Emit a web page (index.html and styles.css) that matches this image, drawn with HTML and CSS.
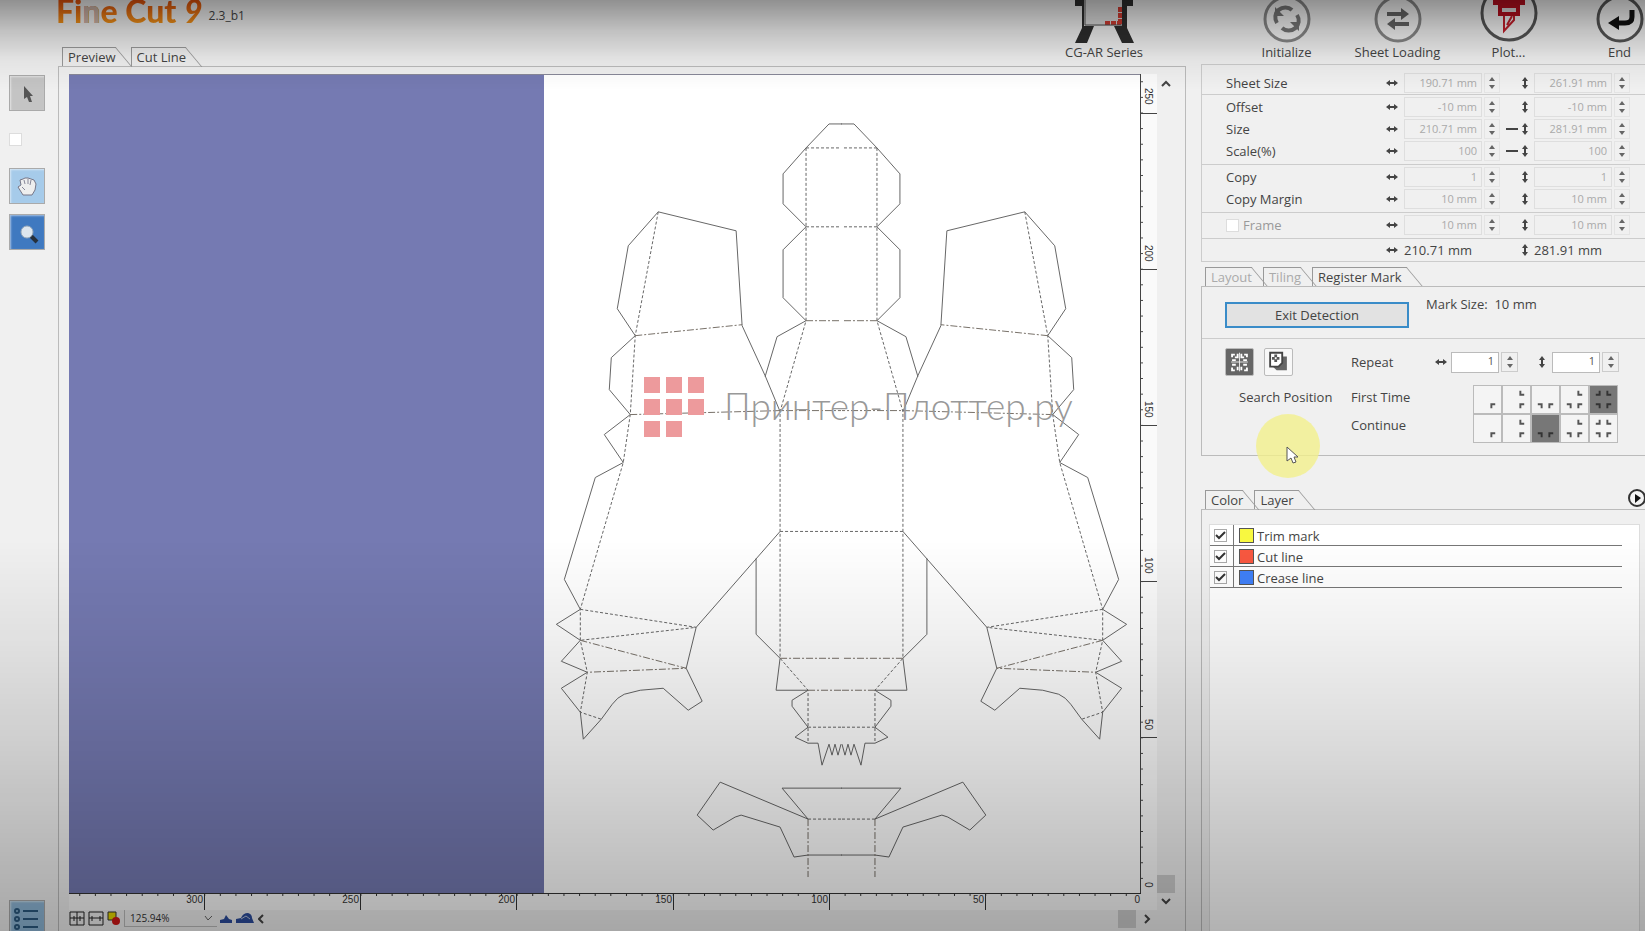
FILE: index.html
```
<!DOCTYPE html>
<html lang="en">
<head>
    <meta charset="UTF-8">
    <meta name="viewport" content="width=device-width, initial-scale=1.0">
    <title>FineCut 9</title>
    <link rel="stylesheet" href="styles.css">
</head>
<body>
    <!-- shared icons -->
    <svg class="defs" aria-hidden="true">
        <symbol id="arrow-h" viewBox="0 0 12 8"><path d="M0 4l4-3v2h4V1l4 3-4 3V5H4v2z"/></symbol>
        <symbol id="arrow-v" viewBox="0 0 8 12"><path d="M4 0l3 4H5v4h2l-3 4-3-4h2V4H1z"/></symbol>
        <symbol id="tl" viewBox="0 0 28 28"><path d="M10 5v4H6"/></symbol>
        <symbol id="tr" viewBox="0 0 28 28"><path d="M18 5v4h4"/></symbol>
        <symbol id="bl" viewBox="0 0 28 28"><path d="M6 19h4v4"/></symbol>
        <symbol id="br" viewBox="0 0 28 28"><path d="M22 19h-4v4"/></symbol>
    </svg>

    <div class="app">
        <header class="header">
            <div class="brand">
                <h1 class="logo">Fi<span class="faded">n</span>e Cut <i>9</i></h1>
                <span class="version">2.3_b1</span>
            </div>
            <div class="device">
                <svg width="60" height="43" viewBox="0 0 60 43">
                    <path d="M1 0h58v6h-6v22l7 15h-12l-8-17H20L13 43H1L8 28V6H1z" fill="#2e2e2e"/>
                    <path d="M10 0h38v26H10z" fill="#dcdcdc"/>
                    <path d="M46 7v17M31 23h16" stroke="#d03c32" stroke-width="4" stroke-dasharray="5 1"/>
                    <path d="M11 0v25h37" fill="none" stroke="#555"/>
                </svg>
                <span>CG-AR Series</span>
            </div>
            <nav class="actions">
                <button class="action">
                    <svg width="48" height="43" viewBox="0 0 48 43">
                        <circle cx="24" cy="19" r="22" class="ring"/>
                        <path d="M14 23a10 10 0 0 1 15-13M34 15a10 10 0 0 1-15 13" fill="none" stroke="#777" stroke-width="4"/>
                        <path d="M12 7v9h9zM36 31v-9h-9z" fill="#777"/>
                    </svg>
                    <span>Initialize</span>
                </button>
                <button class="action">
                    <svg width="48" height="43" viewBox="0 0 48 43">
                        <circle cx="24" cy="19" r="22" class="ring"/>
                        <path d="M13 12h14V8l8 6-8 6v-4H13zM35 22H21v-4l-8 6 8 6v-4h14z" fill="#666"/>
                    </svg>
                    <span>Sheet Loading</span>
                </button>
                <button class="action">
                    <svg width="60" height="43" viewBox="0 0 60 43">
                        <circle cx="30" cy="13" r="27" class="ring dark"/>
                        <path d="M14 0h32v5h-5v11H19V5h-5z" fill="#b7101f"/>
                        <path d="M23 8h14v4H23z" fill="#ddd"/>
                        <path d="M25 16v15l10-11v-4M28 25l5-9" fill="none" stroke="#c4202c" stroke-width="2"/>
                    </svg>
                    <span>Plot...</span>
                </button>
                <button class="action">
                    <svg width="48" height="43" viewBox="0 0 48 43">
                        <circle cx="24" cy="19" r="22" class="ring dark"/>
                        <path d="M36 10v7q0 6-7 6H20" fill="none" stroke="#111" stroke-width="5"/>
                        <path d="M12 23l11-7v14z" fill="#111"/>
                    </svg>
                    <span>End</span>
                </button>
            </nav>
        </header>

        <aside class="tools">
            <button class="tool off" aria-label="Select">
                <svg width="36" height="36" viewBox="0 0 36 36"><path d="M14 10v13l3-2 2 5h3l-2-6h3z" fill="#555"/></svg>
            </button>
            <input class="tool-check" type="checkbox" aria-label="Show guide">
            <button class="tool hand" aria-label="Move">
                <svg width="36" height="36" viewBox="0 0 36 36"><path d="M13 26l-5-8 3-2-1-5 3-1 2-1 3 0 3 1 3 1 2 4-1 6-3 5z" fill="#eee" stroke="#778" /><path d="M14 11l1 4M18 10v5M21 11l-1 5M12 18l3 3" stroke="#889" fill="none"/></svg>
            </button>
            <button class="tool zoom" aria-label="Zoom">
                <svg width="36" height="36" viewBox="0 0 36 36"><path d="M20 20l7 7" stroke="#26303c" stroke-width="4"/><circle cx="17" cy="17" r="6" fill="#dde6ee" stroke="#9ab"/></svg>
            </button>
            <button class="tool list" aria-label="List">
                <svg width="36" height="36" viewBox="0 0 36 36"><path d="M13 10h15M13 18h15M13 26h15" stroke="#2c5a80" stroke-width="2"/><g fill="none" stroke="#2c5a80" stroke-width="2"><circle cx="7" cy="10" r="2"/><circle cx="7" cy="18" r="2"/><circle cx="7" cy="26" r="2"/></g></svg>
            </button>
        </aside>

        <main class="preview">
            <div class="tabs">
                <button class="tab active">Preview</button>
                <button class="tab">Cut Line</button>
            </div>
            <div class="stage">
                <div class="canvas">
                    <div class="paper">
                        <svg class="drawing" viewBox="544 74 596 819">
                            <defs>
                                <g id="half">
                                    <g class="cut">
                                        <path d="M780 411L765 375 742 325 736 230 658 211 628 245 617 308 635 335 611 357 609 389 630 414 604 434 623 462 595 477 564 579 580 609 556 624 580 640 561 661 587 672 561 688 580 712 583 739 601 719 612 704Q617 697 624 694L640 690 663 688 688 710 702 701 686 668 696 627 780 531"/>
                                        <path d="M842 123H829L806 147 783 173V203L806 226 783 249V297L806 320 777 336 765 376"/>
                                        <path d="M756 558V634L780 658 776 690H808L792 700V706L808 727 795 737 808 743H818L822 765 829 744 832 755 835 744 838 755 841 744"/>
                                        <path d="M842 788H782L808 819 720 782 697 815 713 830 735 817 741 815 780 827 794 857 808 855H842"/>
                                    </g>
                                    <g class="crease">
                                        <path d="M806 147V320L780 411V658L808 690V743M806 147H841M806 226H841M780 531H841M808 727H841M808 819H841"/>
                                        <path d="M658 211L635 335 630 414 623 462 580 609V640L587 672 580 712 601 719M580 609L696 627 580 640"/>
                                    </g>
                                    <g class="crease dot">
                                        <path d="M635 335L742 324M806 320H841M630 414L780 410H841M580 640L686 668 587 672M780 658H841M808 690H841M808 819V877"/>
                                    </g>
                                </g>
                            </defs>
                            <use href="#half"/>
                            <use href="#half" transform="translate(1683 0) scale(-1 1)"/>
                        </svg>
                        <div class="watermark">
                            <span class="dots"><i></i><i></i><i></i><i></i><i></i><i></i><i></i><i></i></span>
                            <span class="name">Принтер-Плоттер.ру</span>
                        </div>
                    </div>
                </div>
                <svg class="ruler-v" width="17" viewBox="1140 74 17 819" preserveAspectRatio="xMinYMax slice">
                    <defs><pattern id="tv" x="1140" y="112.5" width="4" height="15.62" patternUnits="userSpaceOnUse"><path d="M0 .5h3" stroke="#444"/></pattern></defs>
                    <rect x="1140" y="74" width="3" height="819" fill="url(#tv)"/>
                    <path d="M1140.500 74V893M1141 113.500h16M1141 269.500h16M1141 425.500h16M1141 581.500h16M1141 737.500h16" stroke="#444"/>
                    <g class="ruler-text">
                        <text transform="translate(1145 88) rotate(90)">250</text>
                        <text transform="translate(1145 245) rotate(90)">200</text>
                        <text transform="translate(1145 401) rotate(90)">150</text>
                        <text transform="translate(1145 557) rotate(90)">100</text>
                        <text transform="translate(1145 719) rotate(90)">50</text>
                        <text transform="translate(1145 882) rotate(90)">0</text>
                    </g>
                </svg>
                <div class="scroll-v">
                    <button aria-label="Scroll up"><svg width="10" height="7" viewBox="0 0 10 7"><path d="M1 6l4-4 4 4"/></svg></button>
                    <span class="thumb"></span>
                </div>
                <svg class="ruler-h" height="17" viewBox="69 893 1088 17" preserveAspectRatio="xMaxYMin slice">
                    <defs><pattern id="th" x="48" y="893" width="15.62" height="4" patternUnits="userSpaceOnUse"><path d="M.5 0v3" stroke="#333"/></pattern></defs>
                    <rect x="69" y="893" width="1071" height="3" fill="url(#th)"/>
                    <path d="M69 893.500H1141M204.500 894v16M360.500 894v16M516.500 894v16M673.500 894v16M829.500 894v16M985.500 894v16" stroke="#333"/>
                    <g class="ruler-text">
                        <text x="203" y="903" text-anchor="end">300</text>
                        <text x="359" y="903" text-anchor="end">250</text>
                        <text x="515" y="903" text-anchor="end">200</text>
                        <text x="672" y="903" text-anchor="end">150</text>
                        <text x="828" y="903" text-anchor="end">100</text>
                        <text x="984" y="903" text-anchor="end">50</text>
                        <text x="1140" y="903" text-anchor="end">0</text>
                    </g>
                </svg>
                <button class="scroll-down" aria-label="Scroll down"><svg width="10" height="7" viewBox="0 0 10 7"><path d="M1 1l4 4 4-4"/></svg></button>
            </div>
            <div class="statusbar">
                <button aria-label="Fit all"><svg width="16" height="15" viewBox="0 0 16 15"><path d="M1 1h14v13H1zM8 1v13M1 7h14M5 5v5M11 5v5" fill="none" stroke="#222"/></svg></button>
                <button aria-label="Fit width"><svg width="16" height="15" viewBox="0 0 16 15"><path d="M1 1h14v13H1zM1 7h14M4 5v5M12 5v5" fill="none" stroke="#222"/></svg></button>
                <button aria-label="Objects"><svg width="14" height="15" viewBox="0 0 14 15"><path d="M1 1h8v8H1z" fill="#e8d800" stroke="#333"/><circle cx="9" cy="10" r="4" fill="#d01818"/></svg></button>
                <select class="zoom-level" aria-label="Zoom level"><option>125.94%</option></select>
                <button aria-label="Zoom out"><svg width="12" height="15" viewBox="0 0 12 15"><path d="M0 12V9l4-1 2-4 3 4 3 1v3z" fill="#2c4c9c"/></svg></button>
                <button aria-label="Zoom in"><svg width="20" height="15" viewBox="0 0 20 15"><path d="M1 12V8l5-1q2-5 7-5 4 1 4 5l2 5z" fill="#2c4c9c"/><path d="M6 8l5-3 4 3" fill="none" stroke="#b8c4dc"/></svg></button>
                <button class="prev" aria-label="Scroll left"><svg width="7" height="10" viewBox="0 0 7 10"><path d="M5 1L1 5l4 4"/></svg></button>
                <span class="thumb"></span>
                <button class="next" aria-label="Scroll right"><svg width="7" height="10" viewBox="0 0 7 10"><path d="M1 1l4 4-4 4"/></svg></button>
            </div>
        </main>

        <section class="side">
            <form class="props">
                <fieldset class="group first">
                    <div class="row">
                        <label for="sheetW">Sheet Size</label>
                        <svg class="ah"><use href="#arrow-h"/></svg>
                        <input id="sheetW" value="190.71 mm" disabled><span class="spin"><button></button><button></button></span>
                        <i></i><svg class="av"><use href="#arrow-v"/></svg>
                        <input aria-label="Sheet height" value="261.91 mm" disabled><span class="spin"><button></button><button></button></span>
                    </div>
                </fieldset>
                <fieldset class="group">
                    <div class="row">
                        <label for="offX">Offset</label>
                        <svg class="ah"><use href="#arrow-h"/></svg>
                        <input id="offX" value="-10 mm" disabled><span class="spin"><button></button><button></button></span>
                        <i></i><svg class="av"><use href="#arrow-v"/></svg>
                        <input aria-label="Offset Y" value="-10 mm" disabled><span class="spin"><button></button><button></button></span>
                    </div>
                    <div class="row">
                        <label for="sizeW">Size</label>
                        <svg class="ah"><use href="#arrow-h"/></svg>
                        <input id="sizeW" value="210.71 mm" disabled><span class="spin"><button></button><button></button></span>
                        <i class="link"></i><svg class="av"><use href="#arrow-v"/></svg>
                        <input aria-label="Size height" value="281.91 mm" disabled><span class="spin"><button></button><button></button></span>
                    </div>
                    <div class="row">
                        <label for="scaleX">Scale(%)</label>
                        <svg class="ah"><use href="#arrow-h"/></svg>
                        <input id="scaleX" value="100" disabled><span class="spin"><button></button><button></button></span>
                        <i class="link"></i><svg class="av"><use href="#arrow-v"/></svg>
                        <input aria-label="Scale Y" value="100" disabled><span class="spin"><button></button><button></button></span>
                    </div>
                </fieldset>
                <fieldset class="group">
                    <div class="row">
                        <label for="copyX">Copy</label>
                        <svg class="ah"><use href="#arrow-h"/></svg>
                        <input id="copyX" value="1" disabled><span class="spin"><button></button><button></button></span>
                        <i></i><svg class="av"><use href="#arrow-v"/></svg>
                        <input aria-label="Copy Y" value="1" disabled><span class="spin"><button></button><button></button></span>
                    </div>
                    <div class="row">
                        <label for="marginX">Copy Margin</label>
                        <svg class="ah"><use href="#arrow-h"/></svg>
                        <input id="marginX" value="10 mm" disabled><span class="spin"><button></button><button></button></span>
                        <i></i><svg class="av"><use href="#arrow-v"/></svg>
                        <input aria-label="Copy Margin Y" value="10 mm" disabled><span class="spin"><button></button><button></button></span>
                    </div>
                </fieldset>
                <fieldset class="group">
                    <div class="row">
                        <label class="frame"><input type="checkbox"> Frame</label>
                        <svg class="ah"><use href="#arrow-h"/></svg>
                        <input aria-label="Frame X" value="10 mm" disabled><span class="spin"><button></button><button></button></span>
                        <i></i><svg class="av"><use href="#arrow-v"/></svg>
                        <input aria-label="Frame Y" value="10 mm" disabled><span class="spin"><button></button><button></button></span>
                    </div>
                </fieldset>
                <div class="group total">
                    <div class="row">
                        <span></span>
                        <svg class="ah"><use href="#arrow-h"/></svg>
                        <output>210.71 mm</output><span></span>
                        <i></i><svg class="av"><use href="#arrow-v"/></svg>
                        <output>281.91 mm</output>
                    </div>
                </div>
            </form>

            <div class="tabs">
                <button class="tab muted">Layout</button>
                <button class="tab muted">Tiling</button>
                <button class="tab active">Register Mark</button>
            </div>
            <div class="register">
                <div class="detect">
                    <button class="exit">Exit Detection</button>
                    <span>Mark Size:&nbsp; 10 mm</span>
                </div>
                <div class="marks">
                    <div class="modes">
                        <button class="mode on" aria-label="Single sheet"><svg width="28" height="28" viewBox="0 0 28 28"><path d="M6 9V6h3M12 5v4H9M16 5v4h3M22 9V6h-3M6 12h4M18 12h4M6 17h4M18 17h4M6 20v3h3M12 23v-4M16 23v-4M22 20v3h-3" fill="none" stroke="#fff" stroke-width="2"/><path d="M14 4v20M5 14h18" stroke="#eee"/></svg></button>
                        <button class="mode" aria-label="Multiple sheets"><svg width="28" height="28" viewBox="0 0 28 28"><path d="M9 8h14v15H12l-4-4z" fill="#666"/><path d="M5 4h13v11l-4 4H5z" fill="#fff" stroke="#444" stroke-width="2"/><path d="M11 6v9M7 10h8" stroke="#555" stroke-width="3" stroke-dasharray="3 2"/></svg></button>
                    </div>
                    <label class="rep" for="repX">Repeat</label>
                    <div class="repeat">
                        <svg class="ah"><use href="#arrow-h"/></svg>
                        <input id="repX" value="1"><span class="spin"><button></button><button></button></span>
                        <svg class="av"><use href="#arrow-v"/></svg>
                        <input aria-label="Repeat Y" value="1"><span class="spin"><button></button><button></button></span>
                    </div>
                    <span class="search">Search Position</span>
                    <div class="times"><span>First Time</span><span>Continue</span></div>
                    <div class="positions">
                        <button><svg><use href="#br"/></svg></button>
                        <button><svg><use href="#br"/><use href="#tr"/></svg></button>
                        <button><svg><use href="#bl"/><use href="#br"/></svg></button>
                        <button><svg><use href="#bl"/><use href="#br"/><use href="#tr"/></svg></button>
                        <button class="on"><svg><use href="#tl"/><use href="#tr"/><use href="#bl"/><use href="#br"/></svg></button>
                        <button><svg><use href="#br"/></svg></button>
                        <button><svg><use href="#br"/><use href="#tr"/></svg></button>
                        <button class="on"><svg><use href="#bl"/><use href="#br"/></svg></button>
                        <button><svg><use href="#bl"/><use href="#br"/><use href="#tr"/></svg></button>
                        <button><svg><use href="#tl"/><use href="#tr"/><use href="#bl"/><use href="#br"/></svg></button>
                    </div>
                </div>
                <div class="pointer">
                    <svg width="64" height="64" viewBox="0 0 64 64"><circle cx="32" cy="32" r="32" fill="#f2f08c" opacity=".8"/><path d="M31 33v14l4-3 2 5 3-1-2-5h4z" fill="#fff" stroke="#555"/></svg>
                </div>
            </div>

            <div class="tabs layer-tabs">
                <button class="tab">Color</button>
                <button class="tab active">Layer</button>
                <button class="more" aria-label="Layer menu"><svg width="19" height="19" viewBox="0 0 19 19"><circle cx="9" cy="9" r="8" fill="#f4f4f4" stroke="#333" stroke-width="2"/><path d="M7 5l6 4-6 5z" fill="#111"/></svg></button>
            </div>
            <div class="layers">
                <ul>
                    <li><span class="check"><input type="checkbox" id="trim" checked></span><span class="swatch yellow"></span><label for="trim">Trim mark</label></li>
                    <li><span class="check"><input type="checkbox" id="cut" checked></span><span class="swatch red"></span><label for="cut">Cut line</label></li>
                    <li><span class="check"><input type="checkbox" id="fold" checked></span><span class="swatch blue"></span><label for="fold">Crease line</label></li>
                </ul>
            </div>
        </section>
    </div>
</body>
</html>
```
FILE: styles.css
```
* {
    box-sizing: border-box;
}

body {
    margin: 0;
    font-family: 'Open Sans', 'Noto Sans', sans-serif;
    font-size: 13px;
    line-height: 18px;
    color: #444;
    background-color: #f0f0f0;
    overflow: hidden;
}

/* shade at the top and bottom of the window */
body::after {
    content: "";
    position: fixed;
    inset: 0;
    pointer-events: none;
    background:
        linear-gradient(rgba(0, 0, 0, 0.4), rgba(0, 0, 0, 0.2) 30px, rgba(0, 0, 0, 0.05) 60px, transparent 90px),
        linear-gradient(transparent 58%, rgba(0, 0, 0, 0.06) 68%, rgba(0, 0, 0, 0.15) 81%, rgba(0, 0, 0, 0.3));
}

button {
    font: inherit;
    color: inherit;
    padding: 0;
    border: 0;
    background: none;
}

input, select {
    font: inherit;
    margin: 0;
}

svg {
    display: block;
}

.defs {
    position: absolute;
    width: 0;
    height: 0;
}

.app {
    display: grid;
    grid-template-columns: 58px minmax(0, 1fr) 445px;
    grid-template-rows: 47px minmax(0, 1fr);
    height: 100vh;
}

/* header */
.header {
    grid-column: 1 / -1;
    display: flex;
    height: 64px;
}

.brand {
    display: flex;
    flex: 1;
    gap: 6px;
    padding-left: 56px;
}

.logo {
    margin: 0;
    font-size: 32px;
    line-height: 22px;
    height: 28px;
    font-weight: 900;
    font-family: Lato, sans-serif;
    color: transparent;
    background: linear-gradient(#e2500c, #f4a01c);
    background-clip: text;
    -webkit-background-clip: text;
}

.faded {
    color: #ccb4a8;
}

.version {
    padding-top: 7px;
    font-size: 12px;
}

.device {
    display: flex;
    flex-direction: column;
    align-items: center;
    width: 80px;
    margin-right: 56px;
}

.actions {
    display: grid;
    grid-template-columns: repeat(4, 111px);
    width: 445px;
    padding-left: 31px;
}

.action {
    display: flex;
    flex-direction: column;
    align-items: center;
}

.ring {
    fill: rgba(255, 255, 255, 0.3);
    stroke: #888;
    stroke-width: 3;
}

.ring.dark {
    stroke: #555;
}

/* left tools */
.tools {
    display: flex;
    flex-direction: column;
    align-items: flex-start;
    gap: 10px;
    padding: 28px 0 0 9px;
    overflow: hidden;
}

.tool {
    width: 36px;
    height: 36px;
    flex: none;
    border: 1px solid #aaa;
    box-shadow: inset 1px 1px 2px #fff8;
}

.off {
    background-color: #c4c4c4;
}

.tool-check, .frame input {
    appearance: none;
    width: 13px;
    height: 13px;
    border: 1px solid #ddd;
    background-color: #fff;
}

.tool-check {
    margin: 12px 0;
}

.hand {
    background-color: #a6cbea;
}

.zoom {
    background-color: #3f79c0;
}

.list {
    margin-top: auto;
    margin-bottom: -5px;
    background-color: #8fb8d8;
}

/* tabs */
.tabs {
    display: flex;
    height: 19px;
    padding-left: 4px;
}

.tab {
    position: relative;
    height: 19px;
    margin-right: 15px;
    padding: 0 0 0 5px;
    border: 1px solid #999;
    border-width: 1px 0 0 1px;
}

.tab::after {
    content: "";
    position: absolute;
    top: -1px;
    right: -8px;
    width: 10px;
    height: 19px;
    border: 1px solid #999;
    border-width: 1px 1px 0 0;
    transform: skewX(40deg);
}

.muted {
    color: #aaa;
}

/* preview */
.preview {
    display: flex;
    flex-direction: column;
    margin-right: 14px;
    min-width: 0;
}

.stage {
    display: grid;
    grid-template-columns: minmax(0, 1fr) 17px 28px;
    grid-template-rows: minmax(0, 1fr) 17px;
    flex: 1;
    min-height: 0;
    padding: 7px 0 0 10px;
    border: 1px solid #bbb;
    border-width: 1px 1px 0 1px;
}

.canvas {
    display: flex;
    justify-content: flex-end;
    background-color: #757ab2;
    border-top: 1px solid #889;
    min-height: 0;
}

.paper {
    position: relative;
    width: 596px;
    background-color: #fff;
}

.drawing {
    width: 100%;
    height: 100%;
}

.cut, .crease {
    fill: none;
    stroke: #666;
}

.crease {
    stroke-dasharray: 3 2;
}

.dot {
    stroke-dasharray: 7 2 2 2;
    stroke: #777068;
}

.watermark {
    position: absolute;
    top: 302px;
    left: 100px;
    display: flex;
    gap: 20px;
}

.dots {
    display: grid;
    grid-template-columns: repeat(3, 16px);
    grid-auto-rows: 16px;
    gap: 6px;
}

.dots i {
    background-color: #ed9a9c;
}

.name {
    font-family: Lato, sans-serif;
    font-weight: 300;
    font-size: 37px;
    line-height: 58px;
    color: #999;
    white-space: nowrap;
}

.ruler-v, .ruler-h {
    background-color: #fafafa;
}

.ruler-v {
    height: 100%;
}

.ruler-h {
    grid-column: 1 / 3;
    width: 100%;
}

.ruler-text {
    font-family: 'Liberation Sans', sans-serif;
    font-size: 10px;
    fill: #333;
}

.scroll-v {
    display: flex;
    flex-direction: column;
    justify-content: space-between;
    align-items: center;
    width: 18px;
    padding-top: 6px;
}

.scroll-v path, .scroll-down path, .prev path, .next path {
    fill: none;
    stroke: #444;
    stroke-width: 2;
}

.thumb {
    width: 18px;
    height: 18px;
    background-color: #cdcdcd;
}

.scroll-down {
    width: 18px;
    display: flex;
    justify-content: center;
    align-items: center;
}

.statusbar {
    display: flex;
    align-items: center;
    gap: 3px;
    height: 21px;
    padding: 0 34px 4px 10px;
    border: 1px solid #bbb;
    border-width: 0 1px;
}

.zoom-level {
    appearance: none;
    width: 93px;
    height: 17px;
    padding: 0 5px;
    border: 1px solid #bbb;
    border-width: 0 0 1px 1px;
    border-radius: 0;
    font-size: 10px;
    line-height: 14px;
    color: #333;
    background: #f0f0f0 url("data:image/svg+xml,%3Csvg xmlns='http://www.w3.org/2000/svg' width='9' height='6'%3E%3Cpath d='M1 1l3 4 4-4' fill='none' stroke='%23666'/%3E%3C/svg%3E") no-repeat right 4px center;
}

.prev {
    margin-right: auto;
}

.next {
    margin-left: 5px;
}

/* right side */
.side {
    display: flex;
    flex-direction: column;
    overflow: hidden;
    padding-left: 1px;
    padding-top: 17px;
}

.props {
    border: 1px solid #ccc;
    border-right: 0;
}

.group {
    margin: 0;
    padding: 1px 0 2px 24px;
    border: 0;
    border-bottom: 1px solid #ccc;
    min-width: 0;
}

.first {
    padding-top: 7px;
    padding-bottom: 0;
}

.total {
    padding-top: 0;
    padding-bottom: 0;
    border: 0;
}

.row {
    display: grid;
    grid-template-columns: 160px 18px 78px 18px 19px 15px 78px 18px;
    align-items: center;
    height: 22px;
}

.ah {
    width: 12px;
    height: 8px;
    fill: #444;
}

.av {
    width: 8px;
    height: 12px;
    fill: #444;
    margin-left: 2px;
}

.row input:disabled {
    width: 78px;
    height: 20px;
    padding: 0 4px 2px;
    border: 1px solid #dedede;
    background-color: #f0f0f0;
    color: #aaa;
    font-size: 11px;
    text-align: right;
}

.link {
    width: 12px;
    height: 2px;
    margin-left: 6px;
    background-color: #444;
}

.spin {
    display: flex;
    flex-direction: column;
    align-items: center;
    justify-content: space-between;
    height: 20px;
    padding: 3px 0;
    margin-left: 2px;
    border: 1px solid #e4e4e4;
}

.spin button {
    border: 3px solid transparent;
    border-top-width: 0;
    border-bottom: 4px solid #666;
}

.spin button + button {
    border-bottom-width: 0;
    border-top: 4px solid #666;
}

.frame {
    display: flex;
    align-items: center;
    gap: 4px;
    color: #999;
}

.total output {
    white-space: nowrap;
}

.side .tabs {
    margin-top: 5px;
}

.side .tab {
    margin-right: 11px;
}

.side .active {
    padding-right: 5px;
}

.register {
    position: relative;
    height: 170px;
    border: 1px solid #bbb;
    border-width: 1px 0 1px 1px;
}

.detect {
    display: flex;
    gap: 17px;
    padding: 15px 0 10px 23px;
    line-height: 5px;
    border-bottom: 1px solid #ccc;
}

.exit {
    width: 184px;
    height: 26px;
    border: 2px solid #3a8cc8;
    background-color: #e2e2e2;
}

.marks {
    display: grid;
    grid-template-columns: 126px 84px 1fr;
    grid-template-rows: 28px 58px;
    row-gap: 9px;
    padding: 9px 0 0 23px;
}

.modes {
    display: flex;
    gap: 10px;
}

.mode {
    width: 29px;
    height: 28px;
    border: 1px solid #bbb;
    border-radius: 2px;
    background-color: #f8f8f8;
}

.mode svg {
    width: 100%;
    height: 100%;
}

.mode.on {
    background-color: #666;
}

.rep {
    line-height: 28px;
}

.repeat {
    display: grid;
    grid-template-columns: 16px 48px 19px 34px 48px 19px;
    align-items: center;
}

.repeat .av {
    justify-self: end;
    margin-right: 6px;
}

.repeat input {
    width: 48px;
    height: 21px;
    padding: 0 4px 3px;
    border: 1px solid #bbb;
    background-color: #fff;
    color: #555;
    font-size: 11px;
    text-align: right;
}

.repeat .spin {
    border-color: #ccc;
}

.search {
    padding: 3px 0 0 14px;
}

.times {
    display: flex;
    flex-direction: column;
    gap: 10px;
    padding-top: 3px;
}

.positions {
    display: grid;
    grid-template-columns: repeat(5, 29px);
    grid-auto-rows: 29px;
    margin-left: 38px;
}

.positions button {
    border: 1px solid #bbb;
    background-color: #f4f4f4;
}

.positions svg {
    width: 27px;
    height: 27px;
    fill: none;
    stroke: #555;
    stroke-width: 2;
}

.positions .on {
    background-color: #777;
}

.positions .on svg {
    stroke: #333;
}

/* highlighted mouse pointer over the panel */
.pointer {
    position: absolute;
    left: 54px;
    bottom: -23px;
    pointer-events: none;
}

.side .layer-tabs {
    margin-top: 34px;
}

.more {
    margin-left: auto;
    margin-right: -2px;
    margin-top: -3px;
}

.layers {
    flex: 1;
    padding: 14px 5px 0 7px;
    border: 1px solid #bbb;
    border-width: 1px 0 0 1px;
}

.layers ul {
    height: 100%;
    margin: 0;
    padding: 0;
    list-style: none;
    background-color: #fff;
    border: 1px solid #ddd;
    border-width: 1px 1px 0 1px;
}

.layers li {
    display: flex;
    align-items: center;
    height: 21px;
    margin-right: 17px;
    border-bottom: 1px solid #777;
}

.check {
    display: flex;
    align-items: center;
    width: 24px;
    height: 21px;
    padding-left: 4px;
    border-right: 1px solid #777;
}

.check input {
    appearance: none;
    width: 13px;
    height: 13px;
    border: 1px solid #aaa;
    background: #fff url("data:image/svg+xml,%3Csvg xmlns='http://www.w3.org/2000/svg' width='11' height='11'%3E%3Cpath d='M1 5l3 3 6-6' fill='none' stroke='%23333' stroke-width='2'/%3E%3C/svg%3E") no-repeat center;
}

.swatch {
    width: 15px;
    height: 15px;
    margin: 0 3px 0 5px;
    border: 1px solid #555;
}

.yellow {
    background-color: #f8f840;
}

.red {
    background-color: #f85840;
}

.blue {
    background-color: #4080f8;
}

.layers label {
    padding-top: 2px;
}
```
